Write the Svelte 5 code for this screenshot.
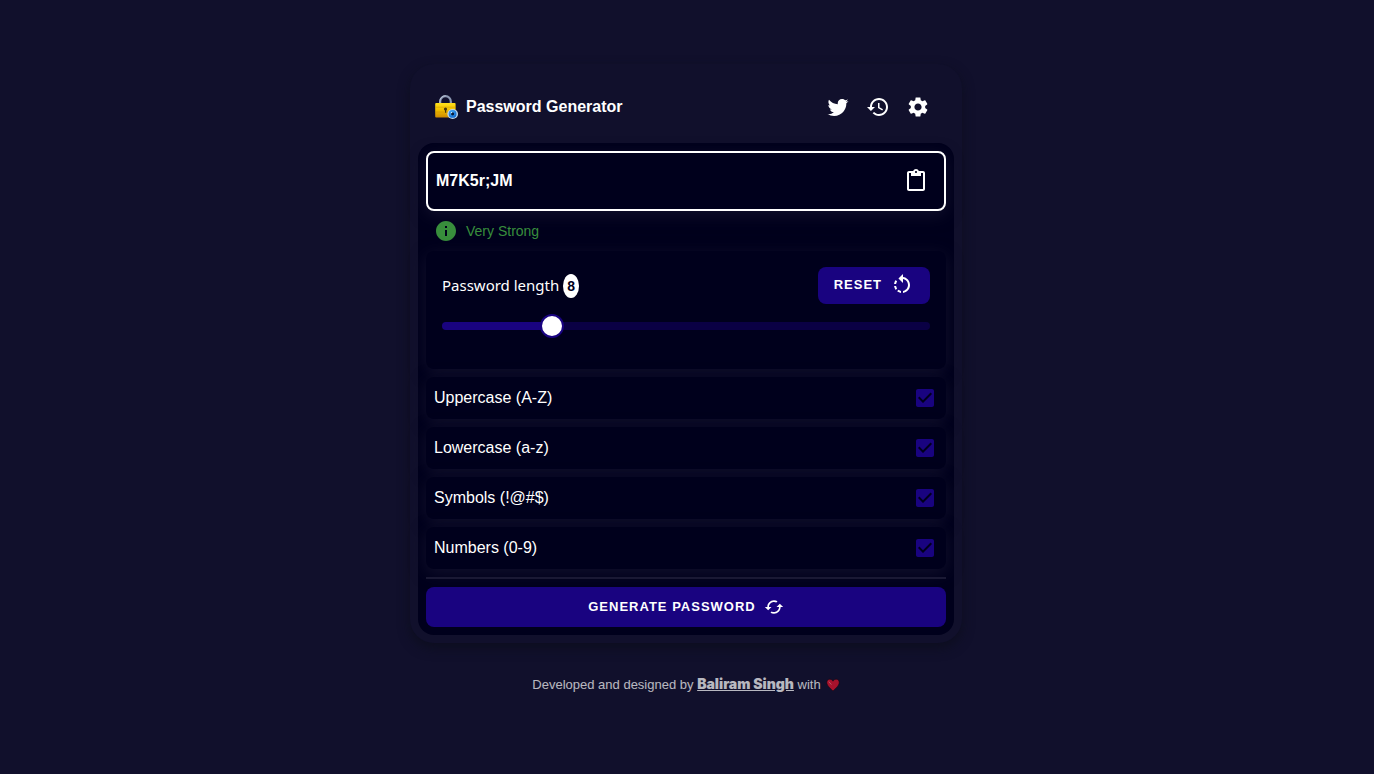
<script>
  const MIN = 1;
  const MAX = 32;
  const DEFAULT_LENGTH = 8;

  const sets = {
    upper: 'ABCDEFGHIJKLMNOPQRSTUVWXYZ',
    lower: 'abcdefghijklmnopqrstuvwxyz',
    symbols: '!@#$%^&*;:?',
    numbers: '0123456789'
  };

  let options = $state([
    { id: 'upper', label: 'Uppercase (A-Z)', checked: true },
    { id: 'lower', label: 'Lowercase (a-z)', checked: true },
    { id: 'symbols', label: 'Symbols (!@#$)', checked: true },
    { id: 'numbers', label: 'Numbers (0-9)', checked: true }
  ]);
  let length = $state(DEFAULT_LENGTH);
  let password = $state('M7K5r;JM');
  let fill = $derived(((length - MIN) / (MAX - MIN)) * 100);

  function generate() {
    const pool = options.filter((o) => o.checked).map((o) => sets[o.id]).join('');
    if (!pool) return;
    password = Array.from({ length }, () => pool[Math.floor(Math.random() * pool.length)]).join('');
  }

  function copy() {
    navigator.clipboard?.writeText(password);
  }
</script>

<div class="page">
  <main class="card">
    <header>
      <svg class="logo" viewBox="0 0 24 24" aria-hidden="true">
        <defs>
          <linearGradient id="gold" x1="0" y1="0" x2="0" y2="1">
            <stop offset="0" stop-color="#ffe01a" />
            <stop offset="0.45" stop-color="#f2c200" />
            <stop offset="1" stop-color="#cf8a00" />
          </linearGradient>
          <radialGradient id="iris" cx="0.4" cy="0.35" r="0.7">
            <stop offset="0" stop-color="#4db4ff" />
            <stop offset="1" stop-color="#0a63c9" />
          </radialGradient>
        </defs>
        <path d="M6.2 9V6.4a5.3 5.3 0 0 1 10.6 0V9" fill="none" stroke="#8d99b3" stroke-width="2.2" />
        <path d="M5.800 8V6.200A5.600 5.600 0 0 1 11.500 0.800" fill="none" stroke="#c6cfe0" stroke-width="0.8" />
        <rect x="1.200" y="8" width="20.400" height="14.600" rx="1" fill="url(#gold)" />
        <path d="M1.400 12.200h20M1.400 17h20" stroke="#c98f00" stroke-width="0.6" opacity="0.7" />
        <circle cx="11.500" cy="14" r="1.600" fill="#473609" />
        <path d="M11 14.500h1.200v3.200h-1.200z" fill="#473609" />
        <ellipse cx="18.700" cy="19" rx="5.300" ry="4.900" fill="#bfd9ee" />
        <circle cx="18.600" cy="18.900" r="3.900" fill="url(#iris)" />
        <circle cx="18.600" cy="18.800" r="1.600" fill="#071b3c" />
        <circle cx="17.600" cy="17.600" r="0.700" fill="#e8f6ff" />
      </svg>
      <h1>Password Generator</h1>
      <nav>
        <a class="icon-button" href="#twitter" aria-label="Twitter">
          <svg viewBox="0 0 24 24"><path d="M22.46 6c-.77.35-1.6.58-2.46.69.88-.53 1.56-1.37 1.88-2.38-.83.5-1.75.85-2.72 1.05C18.37 4.5 17.26 4 16 4c-2.35 0-4.27 1.92-4.27 4.29 0 .34.04.67.11.98C8.28 9.09 5.11 7.38 3 4.79c-.37.63-.58 1.37-.58 2.15 0 1.49.75 2.81 1.91 3.56-.71 0-1.37-.2-1.95-.5v.03c0 2.08 1.48 3.82 3.44 4.21a4.22 4.22 0 0 1-1.93.07 4.28 4.28 0 0 0 4 2.98 8.521 8.521 0 0 1-5.33 1.84c-.34 0-.68-.02-1.02-.06C3.44 20.29 5.7 21 8.12 21 16 21 20.33 14.46 20.33 8.79c0-.19 0-.37-.01-.56.84-.6 1.56-1.36 2.14-2.23z" /></svg>
        </a>
        <button class="icon-button" aria-label="History">
          <svg viewBox="0 0 24 24"><path d="M13 3c-4.97 0-9 4.03-9 9H1l3.89 3.89.07.14L9 12H6c0-3.87 3.13-7 7-7s7 3.13 7 7-3.13 7-7 7c-1.93 0-3.68-.79-4.94-2.06l-1.42 1.42C8.27 19.99 10.51 21 13 21c4.97 0 9-4.03 9-9s-4.03-9-9-9zm-1 5v5l4.28 2.54.72-1.21-3.5-2.08V8H12z" /></svg>
        </button>
        <button class="icon-button" aria-label="Settings">
          <svg viewBox="0 0 24 24"><path d="M19.14 12.94c.04-.3.06-.61.06-.94 0-.32-.02-.64-.07-.94l2.03-1.58c.18-.14.23-.41.12-.61l-1.92-3.32c-.12-.22-.37-.29-.59-.22l-2.39.96c-.5-.38-1.03-.7-1.62-.94l-.36-2.54c-.04-.24-.24-.41-.48-.41h-3.84c-.24 0-.43.17-.47.41l-.36 2.54c-.59.24-1.13.57-1.62.94l-2.39-.96c-.22-.08-.47 0-.59.22L2.74 8.87c-.12.21-.08.47.12.61l2.03 1.58c-.05.3-.09.63-.09.94s.02.64.07.94l-2.03 1.58c-.18.14-.23.41-.12.61l1.92 3.32c.12.22.37.29.59.22l2.39-.96c.5.38 1.03.7 1.62.94l.36 2.54c.05.24.24.41.48.41h3.84c.24 0 .44-.17.47-.41l.36-2.54c.59-.24 1.13-.56 1.62-.94l2.39.96c.22.08.47 0 .59-.22l1.92-3.32c.12-.22.07-.47-.12-.61l-2.01-1.58zM12 15.6c-1.98 0-3.6-1.62-3.6-3.6s1.62-3.6 3.6-3.6 3.6 1.62 3.6 3.6-1.62 3.6-3.6 3.6z" /></svg>
        </button>
      </nav>
    </header>

    <section class="panel">
      <div class="output">
        <output>{password}</output>
        <button class="icon-button" aria-label="Copy password" onclick={copy}>
          <svg viewBox="0 0 24 24"><path d="M19 2h-4.18C14.4.84 13.3 0 12 0c-1.3 0-2.4.84-2.82 2H5c-1.1 0-2 .9-2 2v16c0 1.1.9 2 2 2h14c1.1 0 2-.9 2-2V4c0-1.1-.9-2-2-2zm-7 0c.55 0 1 .45 1 1s-.45 1-1 1-1-.45-1-1 .45-1 1-1zm7 18H5V4h2v3h10V4h2v16z" /></svg>
        </button>
      </div>

      <p class="strength">
        <svg viewBox="0 0 24 24" aria-hidden="true"><path d="M12 2C6.48 2 2 6.48 2 12s4.48 10 10 10 10-4.48 10-10S17.52 2 12 2zm1 15h-2v-6h2v6zm0-8h-2V7h2v2z" /></svg>
        Very Strong
      </p>

      <div class="tile length">
        <div class="length-head">
          <label for="length">Password length <span class="badge">{length}</span></label>
          <button class="primary reset" onclick={() => (length = DEFAULT_LENGTH)}>
            Reset
            <svg viewBox="0 0 24 24" aria-hidden="true"><path d="M7.11 8.53 5.7 7.11C4.8 8.27 4.24 9.61 4.07 11h2.02c.14-.87.49-1.72 1.02-2.47zM6.09 13H4.07c.17 1.39.72 2.73 1.62 3.89l1.41-1.42c-.52-.75-.87-1.59-1.01-2.47zm1.01 5.32c1.16.9 2.51 1.44 3.9 1.61V17.9c-.87-.15-1.71-.49-2.46-1.03L7.1 18.32zM13 4.07V1L8.45 5.55 13 10V6.09c2.84.48 5 2.94 5 5.91s-2.16 5.43-5 5.91v2.02c3.95-.49 7-3.85 7-7.93s-3.05-7.44-7-7.93z" /></svg>
          </button>
        </div>
        <div class="track" style="--fill: {fill}%">
          <input id="length" type="range" min={MIN} max={MAX} bind:value={length} />
        </div>
      </div>

      {#each options as option (option.id)}
        <label class="tile option">
          {option.label}
          <span class="check">
            <input type="checkbox" bind:checked={option.checked} />
            <svg viewBox="0 0 24 24" aria-hidden="true">
              {#if option.checked}
                <path d="M19 3H5c-1.11 0-2 .9-2 2v14c0 1.1.89 2 2 2h14c1.11 0 2-.9 2-2V5c0-1.1-.89-2-2-2zm-9 14l-5-5 1.41-1.41L10 14.17l7.59-7.59L19 8l-9 9z" />
              {:else}
                <path d="M19 5v14H5V5h14m0-2H5c-1.1 0-2 .9-2 2v14c0 1.1.9 2 2 2h14c1.1 0 2-.9 2-2V5c0-1.1-.9-2-2-2z" />
              {/if}
            </svg>
          </span>
        </label>
      {/each}

      <hr />

      <button class="primary generate" onclick={generate}>
        Generate Password
        <svg viewBox="0 0 24 24" aria-hidden="true"><path d="m19 8-4 4h3c0 3.31-2.69 6-6 6-1.01 0-1.97-.25-2.8-.7l-1.46 1.46C8.97 19.54 10.43 20 12 20c4.42 0 8-3.58 8-8h3l-4-4zM6 12c0-3.31 2.69-6 6-6 1.01 0 1.97.25 2.8.7l1.46-1.46C15.03 4.46 13.57 4 12 4c-4.42 0-8 3.58-8 8H1l4 4 4-4H6z" /></svg>
      </button>
    </section>
  </main>

  <footer>
    <span>Developed and designed by <a href="#author">Baliram Singh</a> with</span>
    <svg viewBox="0 0 14 14" role="img" aria-label="love">
      <path d="M7 13C5 10.6 0.8 8 0.8 4.4 0.8 2.4 2.2 1.2 3.8 1.2 5.3 1.2 6.4 2 7 3.2 7.6 2 8.7 1.2 10.2 1.2 11.8 1.2 13.2 2.4 13.2 4.4 13.2 8 9 10.6 7 13z" fill="#e8142c" stroke="#14060c" stroke-width="0.6" />
      <path d="M2.800 3.600 5.400 6.600" stroke="#ff8a94" stroke-width="0.8" fill="none" />
    </svg>
  </footer>
</div>

<style>
  :global(body) {
    margin: 0;
    background: #11102c;
  }

  .page {
    box-sizing: border-box;
    min-height: 100vh;
    padding: 64px 18px 32px 16px;
    display: flex;
    flex-direction: column;
    align-items: center;
    font-family: "Liberation Sans", Arial, sans-serif;
    font-size: 16px;
    line-height: 24px;
    color: #fff;
  }

  svg {
    display: block;
    flex: none;
    width: 24px;
    height: 24px;
    fill: currentColor;
  }

  button {
    border: 0;
    font: inherit;
    color: inherit;
    cursor: pointer;
  }

  .card {
    box-sizing: border-box;
    width: 100%;
    max-width: 552px;
    padding: 8px;
    border-radius: 24px;
    background: #11102c;
    box-shadow: 0 5px 12px #0d0e1f;
  }

  header {
    display: flex;
    align-items: center;
    gap: 8px;
    padding: 15px 16px 16px;
  }

  h1 {
    flex: 1;
    margin: 0;
    font-size: 16px;
    line-height: 24px;
  }

  nav {
    display: flex;
  }

  .icon-button {
    padding: 8px;
    background: none;
    color: #fff;
  }

  .panel {
    display: flex;
    flex-direction: column;
    gap: 8px;
    padding: 8px;
    border-radius: 16px;
    background: #00001c;
  }

  .output,
  .tile {
    border-radius: 8px;
    background: #00001c;
    box-shadow: 0 4px 16px #11102c;
  }

  .output {
    display: flex;
    align-items: center;
    justify-content: space-between;
    padding: 8px;
    border: 2px solid #fff;
    font-weight: 700;
  }

  .strength {
    display: flex;
    align-items: center;
    gap: 8px;
    margin: 0 8px;
    color: #388e3c;
    font-size: 14px;
  }

  .length {
    padding: 16px 16px 39px;
  }

  .length-head {
    display: flex;
    align-items: center;
    justify-content: space-between;
    margin-bottom: 18px;
    font-family: "Noto Sans", "Segoe UI", sans-serif;
    font-size: 15px;
  }

  .badge {
    display: inline-block;
    padding: 0 4px;
    border-radius: 50%;
    background: #fff;
    color: #00001c;
    font: 700 14px/24px "Liberation Sans", Arial, sans-serif;
  }

  .primary {
    display: flex;
    align-items: center;
    justify-content: center;
    gap: 8px;
    border-radius: 8px;
    background: #190380;
    font: 700 13px/24px "Liberation Sans", Arial, sans-serif;
    letter-spacing: 1px;
    text-transform: uppercase;
  }

  .reset {
    padding: 6px 16px 7px;
  }

  .generate {
    padding: 8px;
  }

  .generate svg {
    width: 20px;
    height: 20px;
  }

  .track {
    display: flex;
    align-items: center;
    height: 8px;
    border-radius: 4px;
    background: linear-gradient(to right, #190380 var(--fill), #0a0044 var(--fill));
  }

  .track input {
    appearance: none;
    flex: none;
    width: calc(100% + 24px);
    height: 24px;
    margin: 0 -12px;
    background: none;
    cursor: pointer;
  }

  .track input::-webkit-slider-thumb {
    appearance: none;
    box-sizing: border-box;
    width: 24px;
    height: 24px;
    border: 2px solid #190380;
    border-radius: 50%;
    background: #fff;
  }

  .option {
    display: flex;
    align-items: center;
    justify-content: space-between;
    padding: 0 0 0 8px;
  }

  .check {
    position: relative;
    padding: 9px;
    color: #190380;
  }

  .check input {
    position: absolute;
    inset: 0;
    width: 100%;
    height: 100%;
    margin: 0;
    opacity: 0;
    cursor: pointer;
  }

  hr {
    width: 100%;
    height: 2px;
    margin: 0;
    border: 0;
    background: #1a1934;
  }

  footer {
    display: flex;
    align-items: center;
    gap: 5px;
    margin-top: 29px;
    font-size: 13px;
    opacity: 0.7;
  }

  footer a {
    color: inherit;
    font-family: "Arial Black", Inter, sans-serif;
    font-size: 14px;
    font-weight: 900;
  }

  footer svg {
    width: 14px;
    height: 14px;
  }
</style>
